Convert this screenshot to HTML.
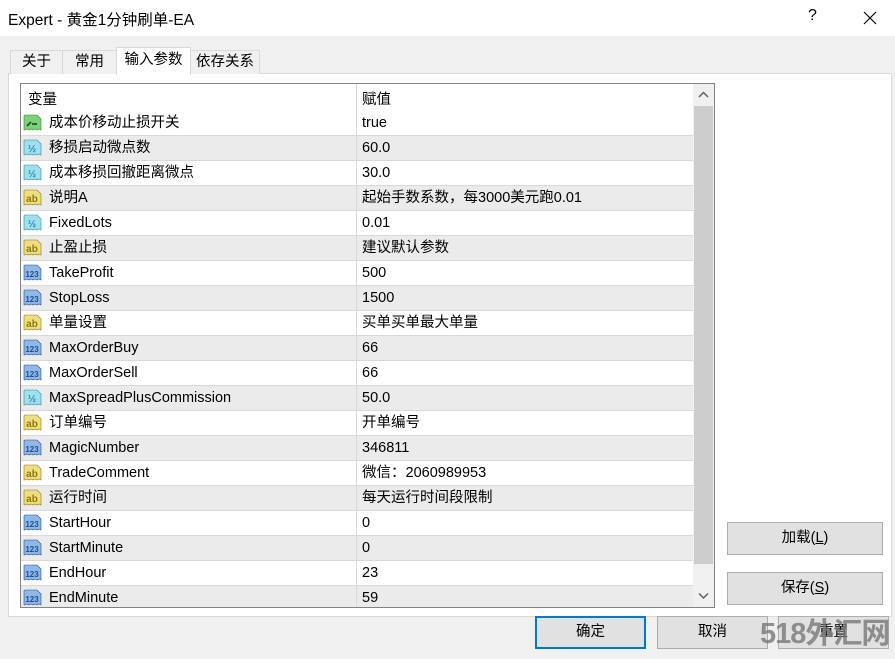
<!DOCTYPE html>
<html><head><meta charset="utf-8"><style>
*{margin:0;padding:0;box-sizing:border-box}
html,body{width:895px;height:659px;overflow:hidden}
body{background:#f0f0f0;position:relative;font-family:"Liberation Sans","Noto Sans CJK SC",sans-serif;font-size:14.5px;color:#000}
.abs{position:absolute}
#title{left:0;top:0;width:895px;height:36px;background:#fff}
.tab{position:absolute;top:50px;height:24px;border:1px solid #d9d9d9;border-bottom:none;background:#f0f0f0;text-align:center;line-height:22px;font-size:14.5px}
#panel{left:8px;top:73px;width:884px;height:544px;background:#fff;border:1px solid #d9d9d9}
#table{left:20px;top:83px;width:695px;height:525px;border:1px solid #828282;background:#fff;overflow:hidden}
.row{position:absolute;left:0;width:672px;height:25px;border-bottom:1px solid #d9d9d9;line-height:25px}
.row.g{background:#ebebeb}
.row .n{position:absolute;left:28px;top:0;white-space:nowrap}
.row .v{position:absolute;left:341px;top:0;white-space:nowrap}
.row svg{position:absolute;left:2px;top:3px}
#div{left:335px;top:0;width:1px;height:525px;background:#d9d9d9;z-index:3}
.btn{position:absolute;background:#e1e1e1;border:1px solid #adadad;text-align:center;font-size:14.5px}
</style></head><body>
<div id="title" class="abs">
<div class="abs" style="left:8px;top:8px;font-size:15.5px;white-space:nowrap">Expert - 黄金1分钟刷单-EA</div>
<div class="abs" style="left:808px;top:7px;font-size:16px">?</div>
<svg class="abs" style="left:863px;top:11px" width="14" height="14"><path d="M1 1L13 13M13 1L1 13" stroke="#000" stroke-width="1.2"/></svg>
</div>
<div id="panel" class="abs"></div>
<div class="tab" style="left:10px;width:53px">关于</div>
<div class="tab" style="left:62px;width:55px">常用</div>
<div class="tab" style="left:190px;width:70px">依存关系</div>
<div class="tab" style="left:116px;width:75px;top:47px;height:28px;background:#fff;z-index:2;line-height:24px">输入参数</div>
<div id="table" class="abs">
<div class="abs" style="left:7px;top:4px;line-height:24px">变量</div>
<div class="abs" style="left:341px;top:4px;line-height:24px">赋值</div>
<div id="div" class="abs"></div>
<div id="rows"></div>
<div class="abs" style="left:672px;top:0;width:21px;height:525px;background:#f0f0f0;z-index:4">
<svg class="abs" style="left:5px;top:7px" width="11" height="8"><path d="M1 6L5.5 1.5L10 6" stroke="#606060" stroke-width="1.5" fill="none"/></svg>
<div class="abs" style="left:1px;top:22px;width:19px;height:458px;background:#cdcdcd"></div>
<svg class="abs" style="left:5px;top:508px" width="11" height="8"><path d="M1 1.5L5.5 6L10 1.5" stroke="#606060" stroke-width="1.5" fill="none"/></svg>
</div>
</div>
<div class="btn" style="left:727px;top:522px;width:156px;height:33px;line-height:31px">加载(<u>L</u>)</div>
<div class="btn" style="left:727px;top:572px;width:156px;height:33px;line-height:31px">保存(<u>S</u>)</div>
<div class="btn" style="left:535px;top:616px;width:111px;height:33px;line-height:29px;border:2px solid #0078d7">确定</div>
<div class="btn" style="left:657px;top:616px;width:111px;height:33px;line-height:31px">取消</div>
<div class="btn" style="left:778px;top:616px;width:111px;height:33px;line-height:31px">重置</div>
<div class="abs" style="left:760px;top:614px;font-size:29px;font-weight:bold;color:rgba(120,120,120,0.8);letter-spacing:-1px;white-space:nowrap;line-height:40px">518外汇网</div>
<script>
var d=[["b","成本价移动止损开关","true"],["h","移损启动微点数","60.0"],["h","成本移损回撤距离微点","30.0"],["a","说明A","起始手数系数，每3000美元跑0.01"],["h","FixedLots","0.01"],["a","止盈止损","建议默认参数"],["n","TakeProfit","500"],["n","StopLoss","1500"],["a","单量设置","买单买单最大单量"],["n","MaxOrderBuy","66"],["n","MaxOrderSell","66"],["h","MaxSpreadPlusCommission","50.0"],["a","订单编号","开单编号"],["n","MagicNumber","346811"],["a","TradeComment","微信：2060989953"],["a","运行时间","每天运行时间段限制"],["n","StartHour","0"],["n","StartMinute","0"],["n","EndHour","23"],["n","EndMinute","59"]];
var ic={b:["#7ed07a","#2e8b2e","⁄"],h:["#9fe0ee","#2a8aa8","½"],a:["#f0de7a","#8a7a10","ab"],n:["#8fb8e8","#1f4f90","123"]};
var h="";
d.forEach(function(r,i){var c=ic[r[0]];var t=i*25+27;
var sym=r[0]=="b"?'<path d="M4 12L8 8M9 10H14" stroke="#1a5a1a" stroke-width="1.8"/>':'<text x="9" y="13" font-size="'+(r[0]=="n"?8:10)+'" font-weight="bold" text-anchor="middle" fill="'+c[1]+'" font-family="Liberation Sans">'+c[2]+'</text>';
h+='<div class="row'+(i%2?' g':'')+'" style="top:'+t+'px"><svg width="19" height="18"><path d="M1 2Q1 1 2 1H14L18 5V16L16 15L14 16L12 15L10 16L8 15L6 16L4 15L2 16L1 16Z" fill="'+c[0]+'" stroke="'+c[1]+'" stroke-width="0.6"/>'+sym+'</svg><span class="n">'+r[1]+'</span><span class="v">'+r[2]+'</span></div>';});
document.getElementById("rows").innerHTML=h;
</script>
</body></html>
